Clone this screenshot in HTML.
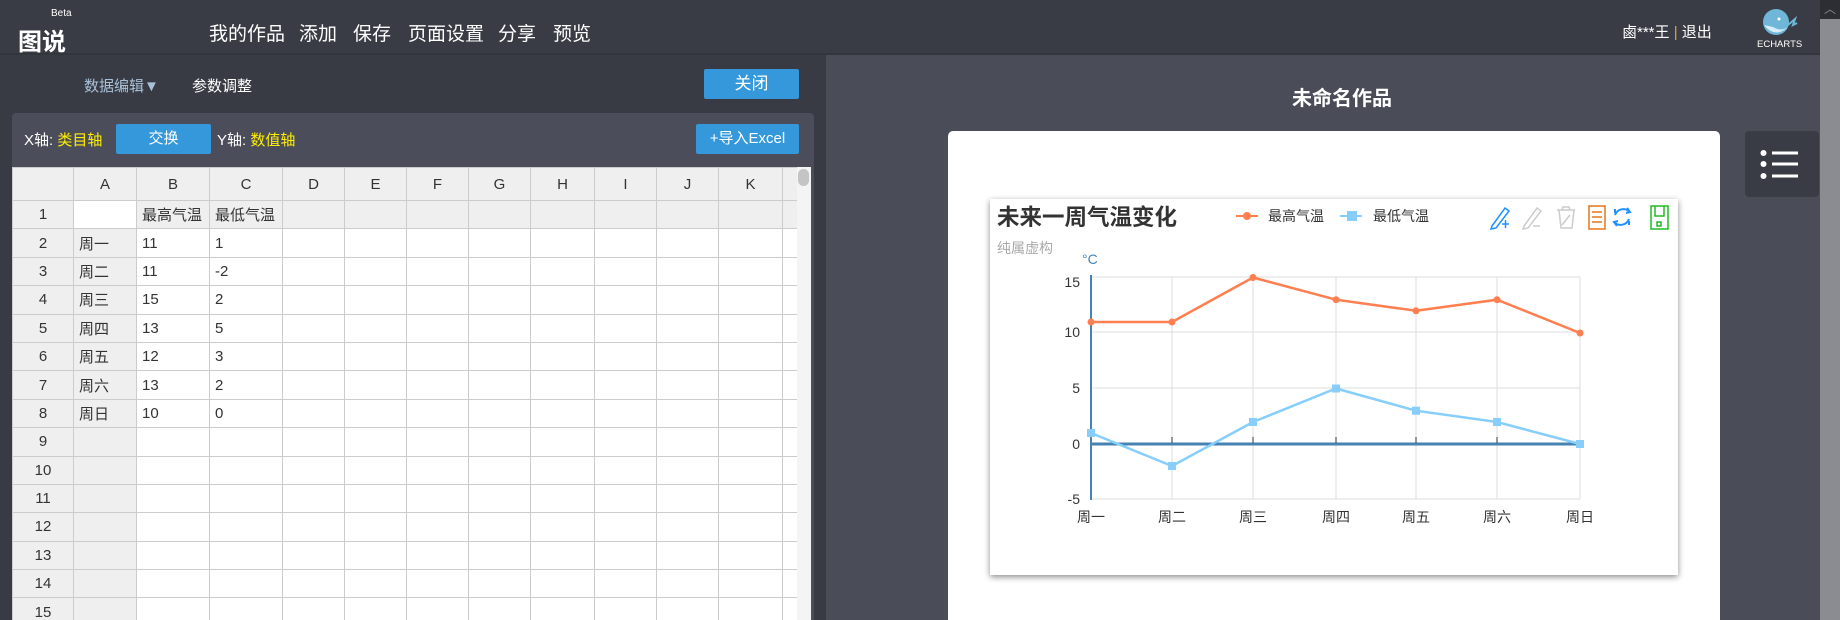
<!DOCTYPE html>
<html style="overflow:hidden;height:620px"><head><meta charset="utf-8">
<style>
*{margin:0;padding:0;box-sizing:border-box}
body{width:1840px;height:620px;overflow:hidden;background:#4a4d58;font-family:"Liberation Sans","Noto Sans CJK SC",sans-serif;position:relative}
.abs{position:absolute}
#wrap{position:absolute;left:0;top:0;width:1840px;height:620px;overflow:hidden}
#top{left:0;top:0;width:1840px;height:55px;background:#393c44;border-bottom:2px solid #33353c}
.nav{top:19px;color:#fff;font-size:19px}
#left{left:0;top:55px;width:826px;height:565px;background:#383b44}
.btn{background:#3498db;color:#fff;text-align:center;border-radius:2px}
#box{left:12px;top:113px;width:802px;height:507px;background:#4b4e5a;border-radius:4px 4px 0 0}
table{position:absolute;left:12px;top:167px;border-collapse:collapse;table-layout:fixed;background:#fff;font-size:15px;color:#333}
td{border:1px solid #ccc;height:28.4px;padding:0 5px;white-space:nowrap;overflow:hidden}
tr.h td{height:33px;background:#efefef;text-align:center}
td.g{background:#efefef}
td.n{background:#efefef;text-align:center}
</style></head><body><div id="wrap">
<div id="top" class="abs"></div>
<div class="abs" style="left:51px;top:8px;color:#fff;font-size:10px">Beta</div>
<div class="abs" style="left:18px;top:22px;color:#fff;font-size:24px;font-weight:bold">图说</div>
<div class="abs nav" style="left:209px">我的作品</div>
<div class="abs nav" style="left:299px">添加</div>
<div class="abs nav" style="left:353px">保存</div>
<div class="abs nav" style="left:408px">页面设置</div>
<div class="abs nav" style="left:498px">分享</div>
<div class="abs nav" style="left:553px">预览</div>
<div class="abs" style="left:1622px;top:21px;color:#fff;font-size:15px">鹵***王 <span style="color:#e8a040">|</span> 退出</div>
<svg class="abs" style="left:1755px;top:5px" width="50" height="45">
<circle cx="21" cy="17" r="13" fill="#6fb6d8"/><path d="M9 20 Q20 34 33 22 Q26 27 18 22Z" fill="#d6eef8"/><circle cx="24" cy="14" r="1.5" fill="#fff"/><path d="M33 20 L40 14 L38 20 L42 18" stroke="#6fb6d8" stroke-width="2" fill="none"/>
<text x="2" y="42" fill="#fff" font-size="9.5" font-family="Liberation Sans">ECHARTS</text></svg>
<div class="abs" style="left:1820px;top:0;width:20px;height:19px;background:#2c2e33;color:#888;font-size:12px;text-align:center">︿</div>
<div class="abs" style="left:1820px;top:19px;width:20px;height:601px;background:#8b8c91"></div>

<div id="left" class="abs"></div>
<div class="abs" style="left:84px;top:75px;color:#a9c0d8;font-size:15px">数据编辑▼</div>
<div class="abs" style="left:192px;top:75px;color:#fff;font-size:15px">参数调整</div>
<div class="abs btn" style="left:704px;top:69px;width:95px;height:30px;line-height:30px;font-size:17px">关闭</div>
<div id="box" class="abs"></div>
<div class="abs" style="left:24px;top:129px;color:#fff;font-size:15px">X轴: <span style="color:#ffee00">类目轴</span></div>
<div class="abs btn" style="left:116px;top:124px;width:95px;height:30px;line-height:30px;font-size:15px">交换</div>
<div class="abs" style="left:217px;top:129px;color:#fff;font-size:15px">Y轴: <span style="color:#ffee00">数值轴</span></div>
<div class="abs btn" style="left:696px;top:124px;width:103px;height:30px;line-height:30px;font-size:15px">+导入Excel</div>
<table>
<colgroup><col style="width:61px"><col style="width:63px"><col style="width:73px"><col style="width:73px"><col style="width:62px"><col style="width:62px"><col style="width:62px"><col style="width:62px"><col style="width:64px"><col style="width:62px"><col style="width:62px"><col style="width:64px"><col style="width:16px"></colgroup>
<tr class="h"><td></td><td>A</td><td>B</td><td>C</td><td>D</td><td>E</td><td>F</td><td>G</td><td>H</td><td>I</td><td>J</td><td>K</td><td></td></tr>
<tr><td class="n">1</td><td></td><td class="g">最高气温</td><td class="g">最低气温</td><td class="g"></td><td class="g"></td><td class="g"></td><td class="g"></td><td class="g"></td><td class="g"></td><td class="g"></td><td class="g"></td><td class="g"></td></tr>
<tr><td class="n">2</td><td class="g">周一</td><td>11</td><td>1</td><td></td><td></td><td></td><td></td><td></td><td></td><td></td><td></td><td></td></tr>
<tr><td class="n">3</td><td class="g">周二</td><td>11</td><td>-2</td><td></td><td></td><td></td><td></td><td></td><td></td><td></td><td></td><td></td></tr>
<tr><td class="n">4</td><td class="g">周三</td><td>15</td><td>2</td><td></td><td></td><td></td><td></td><td></td><td></td><td></td><td></td><td></td></tr>
<tr><td class="n">5</td><td class="g">周四</td><td>13</td><td>5</td><td></td><td></td><td></td><td></td><td></td><td></td><td></td><td></td><td></td></tr>
<tr><td class="n">6</td><td class="g">周五</td><td>12</td><td>3</td><td></td><td></td><td></td><td></td><td></td><td></td><td></td><td></td><td></td></tr>
<tr><td class="n">7</td><td class="g">周六</td><td>13</td><td>2</td><td></td><td></td><td></td><td></td><td></td><td></td><td></td><td></td><td></td></tr>
<tr><td class="n">8</td><td class="g">周日</td><td>10</td><td>0</td><td></td><td></td><td></td><td></td><td></td><td></td><td></td><td></td><td></td></tr>
<tr><td class="n">9</td><td class="g"></td><td></td><td></td><td></td><td></td><td></td><td></td><td></td><td></td><td></td><td></td><td></td></tr>
<tr><td class="n">10</td><td class="g"></td><td></td><td></td><td></td><td></td><td></td><td></td><td></td><td></td><td></td><td></td><td></td></tr>
<tr><td class="n">11</td><td class="g"></td><td></td><td></td><td></td><td></td><td></td><td></td><td></td><td></td><td></td><td></td><td></td></tr>
<tr><td class="n">12</td><td class="g"></td><td></td><td></td><td></td><td></td><td></td><td></td><td></td><td></td><td></td><td></td><td></td></tr>
<tr><td class="n">13</td><td class="g"></td><td></td><td></td><td></td><td></td><td></td><td></td><td></td><td></td><td></td><td></td><td></td></tr>
<tr><td class="n">14</td><td class="g"></td><td></td><td></td><td></td><td></td><td></td><td></td><td></td><td></td><td></td><td></td><td></td></tr>
<tr><td class="n">15</td><td class="g"></td><td></td><td></td><td></td><td></td><td></td><td></td><td></td><td></td><td></td><td></td><td></td></tr>
</table>
<div class="abs" style="left:797px;top:167px;width:14px;height:460px;background:#f4f4f4"></div>
<div class="abs" style="left:798px;top:169px;width:11px;height:17px;background:#c4c4c4;border-radius:6px"></div>

<div class="abs" style="left:1342px;top:82px;width:0"><div style="position:absolute;left:-70px;width:140px;text-align:center;color:#fff;font-size:20px;font-weight:bold">未命名作品</div></div>
<div class="abs" style="left:948px;top:131px;width:772px;height:520px;background:#fff;border-radius:5px 5px 0 0"></div>
<div class="abs" style="left:1745px;top:131px;width:74px;height:66px;background:#393c44;border-radius:4px"></div>
<svg class="abs" style="left:1760px;top:150px" width="46" height="30"><g fill="#fff"><ellipse cx="3.5" cy="3" rx="3" ry="3"/><ellipse cx="3.5" cy="14" rx="3" ry="3"/><ellipse cx="3.5" cy="26" rx="3" ry="3"/><rect x="12" y="1.5" width="26" height="3"/><rect x="12" y="12.5" width="26" height="3"/><rect x="12" y="24.5" width="26" height="3"/></g></svg>

<div class="abs" style="left:990px;top:199px;width:688px;height:376px;background:#fff;box-shadow:0 2px 6px rgba(0,0,0,.45)"></div>
<svg class="abs" style="left:0;top:0" width="1840" height="620" font-family="Liberation Sans, Noto Sans CJK SC, sans-serif">
<text x="997" y="225" font-size="22.5" font-weight="bold" fill="#333">未来一周气温变化</text>
<text x="997" y="253" font-size="14" fill="#aaa">纯属虚构</text>
<g font-size="14" fill="#333"><line x1="1236" y1="216" x2="1258" y2="216" stroke="#ff7f50" stroke-width="2"/><circle cx="1247" cy="216" r="4" fill="#ff7f50"/><text x="1268" y="221">最高气温</text>
<line x1="1340" y1="216" x2="1362" y2="216" stroke="#87cefa" stroke-width="2"/><rect x="1347" y="211" width="10" height="10" fill="#87cefa"/><text x="1373" y="221">最低气温</text></g>
<g fill="none" stroke-width="1.5">
<path d="M1492 226 L1505 208 L1509 211 L1496 228 L1491 229Z M1502 224h7 M1505.5 220v8" stroke="#1e90ff"/>
<path d="M1524 226 L1537 208 L1541 211 L1528 228 L1523 229Z M1533 226h7" stroke="#ccc"/>
<path d="M1557 210h18 M1562 210l1-3h6l1 3 M1559 210l2 18h11l2-18 M1562 225l8-10" stroke="#ccc"/>
<path d="M1589 206h16v23h-16z M1592 212h10 M1592 217h10 M1592 222h10" stroke="#e8741c"/>
<path d="M1630 212a9 9 0 0 0-15 3 M1615 213l0-4 M1614 222a9 9 0 0 0 15-3 M1629 221l0 4 M1627 208l3 4-4 1 M1617 226l-3-4 4-1" stroke="#1e90ff" stroke-width="2"/>
<path d="M1651 206h17v23h-17z M1655 206v10h9v-10 M1657 222h4v4h-4z" stroke="#22bb22"/>
</g>
<text x="1082" y="264" font-size="14" fill="#4682b4">°C</text>
<g stroke="#ddd" stroke-width="1">
<line x1="1091" y1="277" x2="1580" y2="277"/><line x1="1091" y1="332" x2="1580" y2="332"/><line x1="1091" y1="388" x2="1580" y2="388"/><line x1="1091" y1="499" x2="1580" y2="499"/>
<line x1="1172" y1="277" x2="1172" y2="499"/><line x1="1253" y1="277" x2="1253" y2="499"/><line x1="1336" y1="277" x2="1336" y2="499"/><line x1="1416" y1="277" x2="1416" y2="499"/><line x1="1497" y1="277" x2="1497" y2="499"/><line x1="1580" y1="277" x2="1580" y2="499"/>
</g>
<line x1="1091" y1="444" x2="1580" y2="444" stroke="#4682b4" stroke-width="3"/>
<line x1="1091" y1="275" x2="1091" y2="500" stroke="#4682b4" stroke-width="2"/>
<g stroke="#333"><line x1="1172" y1="437" x2="1172" y2="443"/><line x1="1253" y1="437" x2="1253" y2="443"/><line x1="1336" y1="437" x2="1336" y2="443"/><line x1="1416" y1="437" x2="1416" y2="443"/><line x1="1497" y1="437" x2="1497" y2="443"/></g>
<g font-size="14" fill="#333" text-anchor="end"><text x="1080" y="287">15</text><text x="1080" y="337">10</text><text x="1080" y="393">5</text><text x="1080" y="449">0</text><text x="1080" y="504">-5</text></g>
<g font-size="14" fill="#333" text-anchor="middle"><text x="1091" y="522">周一</text><text x="1172" y="522">周二</text><text x="1253" y="522">周三</text><text x="1336" y="522">周四</text><text x="1416" y="522">周五</text><text x="1497" y="522">周六</text><text x="1580" y="522">周日</text></g>
<polyline points="1091,322 1172,322 1253,277.5 1336,299.7 1416,310.8 1497,299.7 1580,333" fill="none" stroke="#ff7f50" stroke-width="2.5"/>
<g fill="#ff7f50"><circle cx="1091" cy="322" r="3.5"/><circle cx="1172" cy="322" r="3.5"/><circle cx="1253" cy="277.5" r="3.5"/><circle cx="1336" cy="299.7" r="3.5"/><circle cx="1416" cy="310.8" r="3.5"/><circle cx="1497" cy="299.7" r="3.5"/><circle cx="1580" cy="333" r="3.5"/></g>
<polyline points="1091,433 1172,466 1253,422 1336,388.5 1416,410.7 1497,422 1580,444" fill="none" stroke="#87cefa" stroke-width="2.5"/>
<g fill="#87cefa"><rect x="1087" y="429" width="8" height="8"/><rect x="1168" y="462" width="8" height="8"/><rect x="1249" y="418" width="8" height="8"/><rect x="1332" y="384.5" width="8" height="8"/><rect x="1412" y="406.7" width="8" height="8"/><rect x="1493" y="418" width="8" height="8"/><rect x="1576" y="440" width="8" height="8"/></g>
</svg>
</div></body></html>
